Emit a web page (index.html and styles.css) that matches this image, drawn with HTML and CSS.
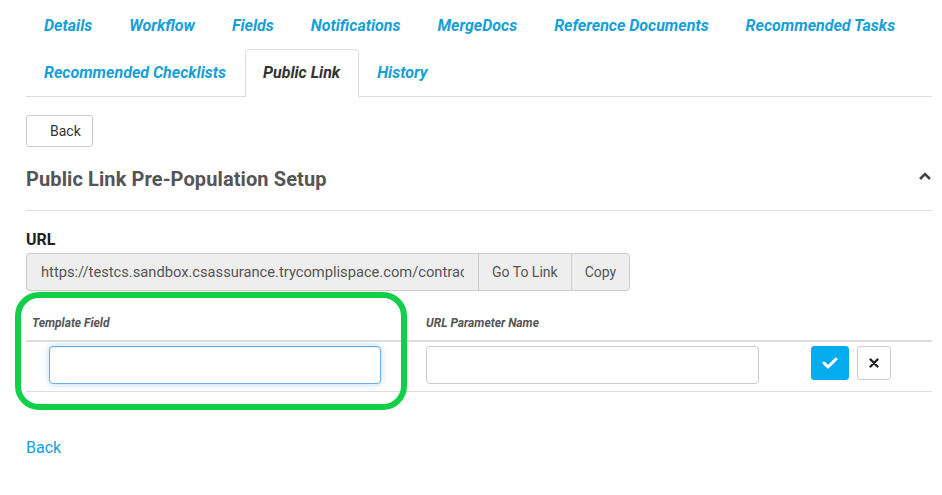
FILE: index.html
```html
<!DOCTYPE html>
<html>
<head>
<meta charset="utf-8">
<link rel="stylesheet" href="styles.css">
</head>
<body>
<div class="page">
  <ul class="tabs">
    <li class="tab"><a>Details</a></li>
    <li class="tab"><a>Workflow</a></li>
    <li class="tab"><a>Fields</a></li>
    <li class="tab"><a>Notifications</a></li>
    <li class="tab"><a>MergeDocs</a></li>
    <li class="tab"><a>Reference Documents</a></li>
    <li class="tab"><a>Recommended Tasks</a></li>
    <li class="tab"><a>Recommended Checklists</a></li>
    <li class="tab active"><a>Public Link</a></li>
    <li class="tab"><a>History</a></li>
  </ul>

  <button class="btn-back">Back</button>

  <div class="section-header">
    <h2 class="section-title">Public Link Pre-Population Setup</h2>
    <svg class="chevron" width="14" height="10" viewBox="0 0 14 10"><polyline points="2,8 7,3 12,8" fill="none" stroke="#444" stroke-width="2.6"/></svg>
  </div>

  <label class="url-label">URL</label>
  <div class="input-group">
    <input class="url-input" type="text" readonly value="https://testcs.sandbox.csassurance.trycomplispace.com/contract">
    <button class="group-btn">Go To Link</button>
    <button class="group-btn last">Copy</button>
  </div>

  <div class="table-wrap">
    <table class="map-table">
      <thead>
        <tr>
          <th class="col1">Template Field</th>
          <th class="col2">URL Parameter Name</th>
          <th class="col3"></th>
        </tr>
      </thead>
      <tbody>
        <tr>
          <td class="col1"><input class="field focused" type="text"></td>
          <td class="col2"><input class="field" type="text"></td>
          <td class="col3">
            <div class="actions">
              <button class="btn-ok"><svg width="16" height="12" viewBox="0 0 16 12"><polyline points="2,6 6,10 14,2" fill="none" stroke="#fff" stroke-width="3" stroke-linecap="round" stroke-linejoin="round"/></svg></button>
              <button class="btn-cancel"><svg width="10" height="10" viewBox="0 0 10 10"><path d="M1.5 1.5 L8.5 8.5 M8.5 1.5 L1.5 8.5" stroke="#222" stroke-width="2.4" stroke-linecap="round"/></svg></button>
            </div>
          </td>
        </tr>
      </tbody>
    </table>
    <div class="highlight"></div>
  </div>

  <a class="back-link">Back</a>
</div>
</body>
</html>
```

FILE: styles.css
```css
* { box-sizing: border-box; }
html, body { margin: 0; padding: 0; background: #fff; }
body { font-family: Roboto, "Liberation Sans", Arial, sans-serif; color: #333; }

.page { padding: 2px 10px 40px 26px; width: 942px; }

.tabs {
  list-style: none;
  margin: 0;
  padding: 0;
  display: flex;
  flex-wrap: wrap;
  border-bottom: 1px solid #ddd;
}
.tab {
  margin-bottom: -1px;
  border: 1px solid transparent;
  border-radius: 4px 4px 0 0;
}
.tab a {
  display: block;
  padding: 11px 18px 11px 17px;
  line-height: 24px;
  font-size: 16px;
  font-weight: 700;
  font-style: italic;
  color: #169fd9;
}
.tab.active { border-color: #ddd; border-bottom-color: #fff; background: #fff; }
.tab.active a { color: #333; }

.btn-back {
  display: block;
  margin-top: 18px;
  height: 32px;
  padding: 0 11px 0 23px;
  background: #fff;
  border: 1px solid #ccc;
  border-radius: 3px;
  font-family: Roboto, "Liberation Sans", Arial, sans-serif;
  font-size: 14px;
  color: #333;
}

.section-header {
  margin-top: 20px;
  display: flex;
  align-items: center;
  justify-content: space-between;
  padding-bottom: 19px;
  border-bottom: 1px solid #ddd;
}
.section-title {
  margin: 0;
  font-size: 20px;
  line-height: 24px;
  font-weight: 700;
  letter-spacing: 0.1px;
  color: #555;
}
.chevron { margin-right: 0; margin-top: -6px; }

.url-label {
  display: block;
  margin-top: 19px;
  font-size: 16px;
  line-height: 20px;
  font-weight: 700;
  color: #222;
}
.input-group {
  margin-top: 3px;
  display: flex;
  height: 38px;
}
.url-input {
  width: 452px;
  height: 38px;
  padding: 0 14px;
  background: #eee;
  border: 1px solid #ccc;
  border-right: none;
  border-radius: 4px 0 0 4px;
  font-family: Roboto, "Liberation Sans", Arial, sans-serif;
  font-size: 14.7px;
  color: #555;
  outline: none;
}
.group-btn {
  height: 38px;
  padding: 0 13px;
  background: #eee;
  border: 1px solid #ccc;
  border-right: none;
  font-family: Roboto, "Liberation Sans", Arial, sans-serif;
  font-size: 14px;
  color: #555;
}
.group-btn.last { border-right: 1px solid #ccc; border-radius: 0 4px 4px 0; }

.table-wrap { position: relative; margin-top: 15px; }
.map-table {
  width: 906px;
  border-collapse: collapse;
}
.map-table th {
  text-align: left;
  padding: 8px 6px;
  font-size: 12px;
  line-height: 18px;
  font-weight: 700;
  font-style: italic;
  color: #555;
  border-bottom: 2px solid #ddd;
}
.map-table td {
  padding: 4px 0 7px;
  border-bottom: 1px solid #ddd;
  vertical-align: top;
}
.col1 { width: 394px; }
.col2 { width: 385px; }
td.col1 { padding-left: 23px; }
td.col2 { padding-left: 6px; }
.field {
  display: block;
  width: 333px;
  height: 38px;
  border: 1px solid #ccc;
  border-radius: 4px;
  background: #fff;
  outline: none;
}
.field.focused {
  width: 332px;
  border-color: #66afe9;
  box-shadow: inset 0 1px 1px rgba(0,0,0,.075), 0 0 6px rgba(102,175,233,.5);
}
.actions { display: flex; gap: 8px; padding-left: 6px; }
.btn-ok, .btn-cancel {
  width: 38px;
  height: 34px;
  display: flex;
  align-items: center;
  justify-content: center;
  padding: 0;
  border-radius: 3px;
}
.btn-ok { background: #05adef; border: 1px solid #05adef; }
.btn-cancel { width: 34px; background: #fff; border: 1px solid #ccc; }

.highlight {
  position: absolute;
  left: -11px;
  top: -14px;
  width: 392px;
  height: 118px;
  border: 6px solid #12cf48;
  border-radius: 24px;
  pointer-events: none;
}

.back-link {
  display: block;
  margin-top: 46px;
  font-size: 16px;
  line-height: 20px;
  color: #169fd9;
}
```
